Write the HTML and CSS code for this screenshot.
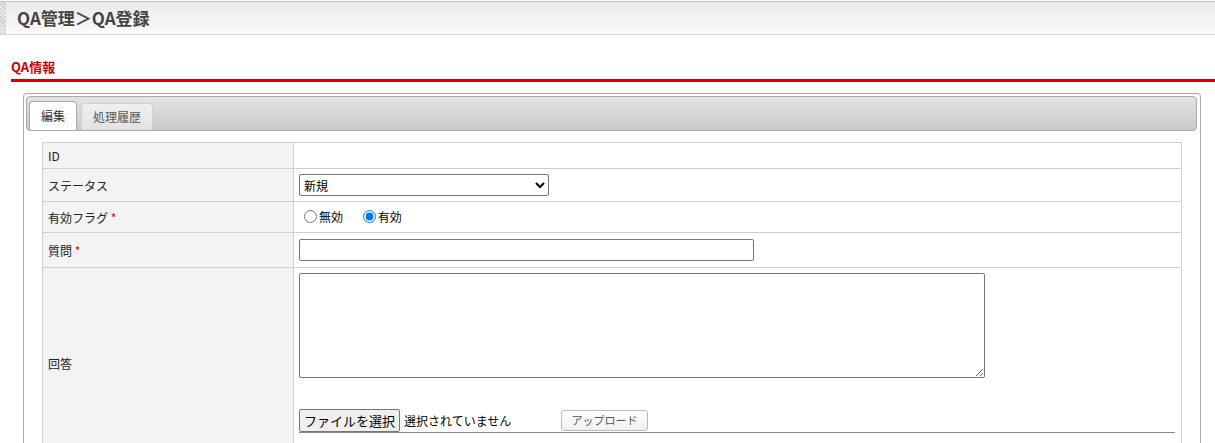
FILE: index.html
```html
<!DOCTYPE html>
<html lang="ja">
<head>
<meta charset="utf-8">
<title>QA登録</title>
<link rel="stylesheet" href="styles.css">
</head>
<body>
<div class="page-header">
  <div class="hatch"></div>
  <h1 class="page-title">QA管理＞QA登録</h1>
</div>
<div class="section">
  <h2 class="section-title">QA情報</h2>
  <div class="panel">
    <div class="tabbar">
      <div class="tab active">編集</div>
      <div class="tab">処理履歴</div>
    </div>
    <table class="form">
      <tr class="r-id"><th>ID</th><td></td></tr>
      <tr class="r-status"><th>ステータス</th><td>
        <select class="sel"><option>新規</option></select>
      </td></tr>
      <tr class="r-flag"><th>有効フラグ <span class="req">*</span></th><td>
        <label class="radio"><input type="radio" name="f">無効</label>
        <label class="radio"><input type="radio" name="f" checked>有効</label>
      </td></tr>
      <tr class="r-q"><th>質問 <span class="req">*</span></th><td>
        <input type="text" class="txt">
      </td></tr>
      <tr class="r-a"><th>回答</th><td>
        <textarea class="area"></textarea>
        <div class="filerow">
          <span class="filebtn">ファイルを選択</span>
          <span class="filetext">選択されていません</span>
          <span class="upload">アップロード</span>
        </div>
      </td></tr>
    </table>
  </div>
</div>
</body>
</html>
```
FILE: styles.css
```css
html, body { margin: 0; padding: 0; background: #fff; }
body {
  font-family: "Noto Sans CJK JP", "Noto Sans", sans-serif;
  font-size: 12px;
  color: #222;
  overflow: hidden;
  height: 443px;
}
.page-header {
  display: flex;
  align-items: center;
  margin-top: 1px;
  height: 32px;
  border-top: 1px solid #c4c4c4;
  border-bottom: 1px solid #d4d4dc;
  background: linear-gradient(#e9e9e9, #fbfbfb);
}
.hatch {
  width: 6px;
  align-self: stretch;
  background: repeating-linear-gradient(45deg, #c8c8c8 0 1px, #e8e8e8 1px 3px);
}
.page-title {
  margin: 0 0 0 11px;
  font-size: 17px;
  font-weight: bold;
  color: #444;
  line-height: 20px;
}
.section { padding: 0 0 0 11px; }
.section-title {
  margin: 20px 0 0 0;
  font-size: 13px;
  font-weight: bold;
  color: #cc0000;
  line-height: 24px;
  padding-bottom: 0;
  border-bottom: 3px solid #d40000;
}
.panel {
  margin: 11px 14px 0 12px;
  border: 1px solid #aaa;
  border-radius: 4px 4px 0 0;
  border-bottom: none;
  padding: 2px 3px 0 2px;
  height: 349px;
  overflow: hidden;
}
.tabbar {
  display: flex;
  align-items: flex-end;
  gap: 4px;
  height: 33px;
  border: 1px solid #aaa;
  border-radius: 4px;
  background: linear-gradient(#e4e4e4, #c9c9c9);
  padding: 0 0 0 2px;
}
.tab {
  height: 26px;
  line-height: 26px;
  padding: 0 11px;
  border: 1px solid #d0d0d0;
  border-bottom: none;
  border-radius: 4px 4px 0 0;
  background: linear-gradient(#f0f0f0, #e2e2e2);
  color: #555;
  font-size: 12px;
}
.tab.active {
  background: #fff;
  color: #333;
  height: 28px;
  line-height: 28px;
  border-color: #aaa;
}
.form {
  margin: 11px 0 0 16px;
  width: 1140px;
  border-collapse: collapse;
}
.form th, .form td {
  border: 1px solid #cfcfcf;
  padding: 0 5px;
  text-align: left;
  vertical-align: middle;
  font-weight: normal;
}
.form th {
  width: 240px;
  background: #f2f3f2;
  color: #222;
}
.r-id th, .r-id td { height: 25px; }
.r-status th, .r-status td { height: 32px; }
.r-flag th, .r-flag td { height: 30px; }
.r-q th, .r-q td { height: 34px; }
.r-a th, .r-a td { height: 185px; }
.r-a td { vertical-align: top; padding-top: 5px; }
.req { color: #e00; }
.sel {
  width: 250px;
  height: 22px;
  font-family: inherit;
  font-size: 12px;
  border: 1px solid #767676;
  border-radius: 2px;
  background: #fff;
  color: #000;
}
.radio { display: inline-flex; align-items: center; margin-right: 12px; color: #000; }
.radio input { margin: 0 2px 0 5px; }
.txt {
  width: 453px;
  height: 20px;
  box-sizing: content-box;
  padding: 0;
  border: 1px solid #767676;
  border-radius: 2px;
  margin: 0;
}
.area {
  display: block;
  width: 682px;
  height: 101px;
  padding: 1px;
  border: 1px solid #767676;
  border-radius: 2px;
  margin: 0;
  resize: both;
}
.filerow {
  display: flex;
  align-items: center;
  margin-top: 30px;
  border-bottom: 1px solid #888;
  width: 876px;
  height: 24px;
}
.filebtn {
  display: inline-block;
  height: 21px;
  line-height: 21px;
  padding: 0 4px;
  border: 1px solid #767676;
  border-radius: 2px;
  background: #efefef;
  color: #000;
  font-size: 13px;
}
.filetext { margin-left: 4px; font-size: 12px; color: #000; width: 157px; }
.upload {
  display: inline-block;
  height: 19px;
  line-height: 19px;
  width: 85px;
  text-align: center;
  border: 1px solid #b8b8c0;
  border-radius: 3px;
  background: linear-gradient(#ffffff, #f0f0f0);
  color: #555;
  font-size: 11px;
}
```
